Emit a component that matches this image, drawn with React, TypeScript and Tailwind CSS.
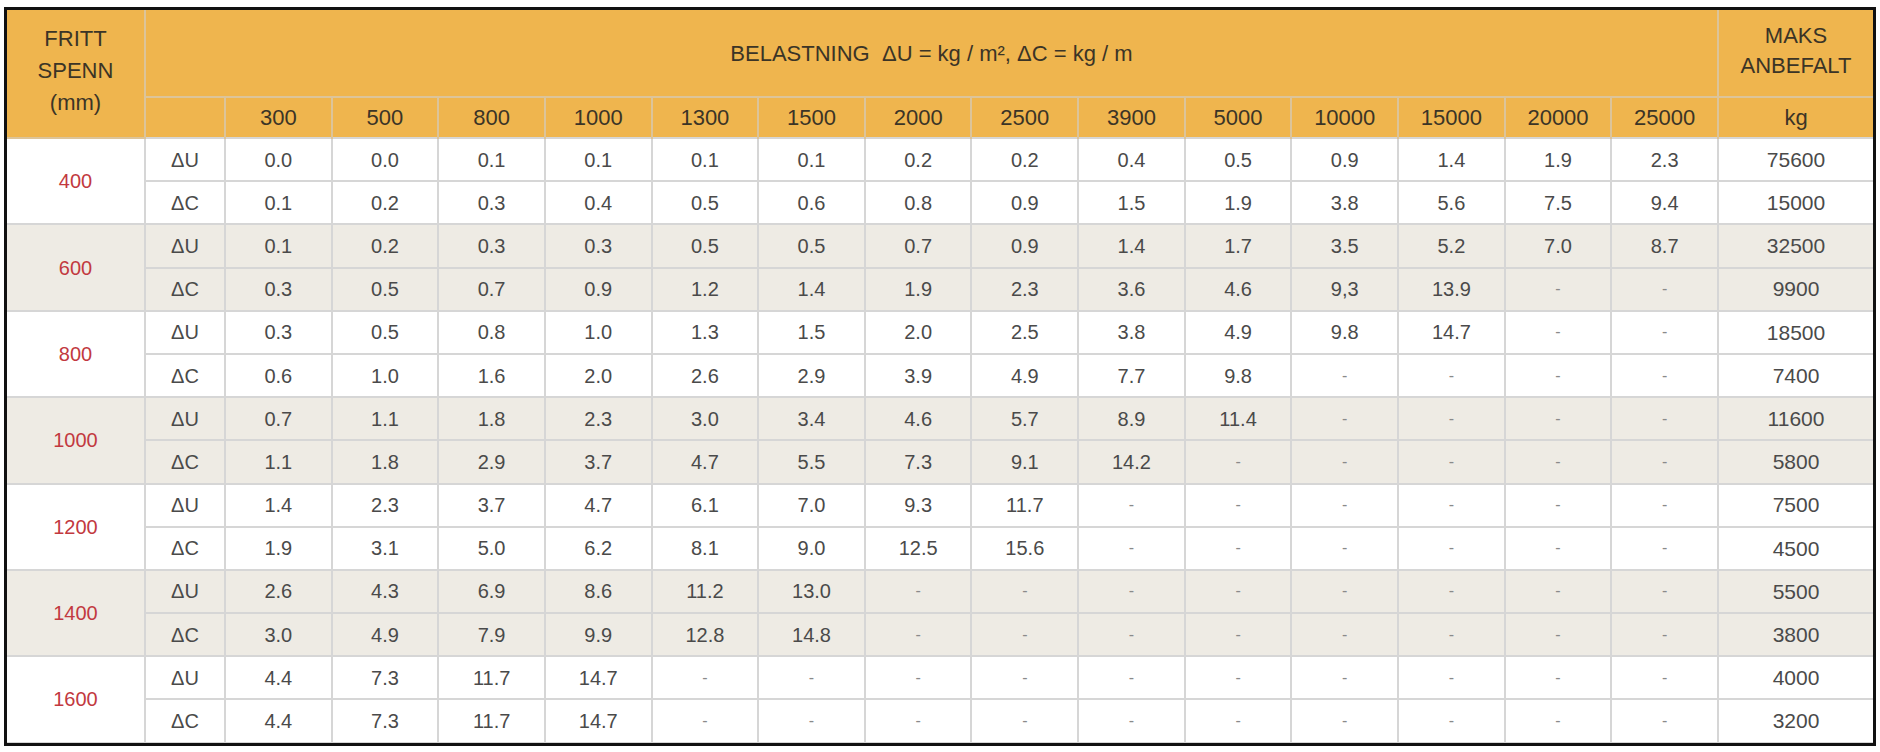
const spans = ["300", "500", "800", "1000", "1300", "1500", "2000", "2500", "3900", "5000", "10000", "15000", "20000", "25000"];

type Group = {
  span: string;
  u: string[];
  c: string[];
  maxU: string;
  maxC: string;
};

const fill = (vals: string[]) => [...vals, ...Array(14 - vals.length).fill("-")];

const groups: Group[] = [
  {
    span: "400",
    u: ["0.0", "0.0", "0.1", "0.1", "0.1", "0.1", "0.2", "0.2", "0.4", "0.5", "0.9", "1.4", "1.9", "2.3"],
    c: ["0.1", "0.2", "0.3", "0.4", "0.5", "0.6", "0.8", "0.9", "1.5", "1.9", "3.8", "5.6", "7.5", "9.4"],
    maxU: "75600",
    maxC: "15000",
  },
  {
    span: "600",
    u: ["0.1", "0.2", "0.3", "0.3", "0.5", "0.5", "0.7", "0.9", "1.4", "1.7", "3.5", "5.2", "7.0", "8.7"],
    c: fill(["0.3", "0.5", "0.7", "0.9", "1.2", "1.4", "1.9", "2.3", "3.6", "4.6", "9,3", "13.9"]),
    maxU: "32500",
    maxC: "9900",
  },
  {
    span: "800",
    u: fill(["0.3", "0.5", "0.8", "1.0", "1.3", "1.5", "2.0", "2.5", "3.8", "4.9", "9.8", "14.7"]),
    c: fill(["0.6", "1.0", "1.6", "2.0", "2.6", "2.9", "3.9", "4.9", "7.7", "9.8"]),
    maxU: "18500",
    maxC: "7400",
  },
  {
    span: "1000",
    u: fill(["0.7", "1.1", "1.8", "2.3", "3.0", "3.4", "4.6", "5.7", "8.9", "11.4"]),
    c: fill(["1.1", "1.8", "2.9", "3.7", "4.7", "5.5", "7.3", "9.1", "14.2"]),
    maxU: "11600",
    maxC: "5800",
  },
  {
    span: "1200",
    u: fill(["1.4", "2.3", "3.7", "4.7", "6.1", "7.0", "9.3", "11.7"]),
    c: fill(["1.9", "3.1", "5.0", "6.2", "8.1", "9.0", "12.5", "15.6"]),
    maxU: "7500",
    maxC: "4500",
  },
  {
    span: "1400",
    u: fill(["2.6", "4.3", "6.9", "8.6", "11.2", "13.0"]),
    c: fill(["3.0", "4.9", "7.9", "9.9", "12.8", "14.8"]),
    maxU: "5500",
    maxC: "3800",
  },
  {
    span: "1600",
    u: fill(["4.4", "7.3", "11.7", "14.7"]),
    c: fill(["4.4", "7.3", "11.7", "14.7"]),
    maxU: "4000",
    maxC: "3200",
  },
];

const cell = "border-2 border-[#d6d6d6] text-center align-middle";
const head = "border-2 border-[#dcc49a] text-center align-middle";

function DataRow({ g, kind, bg }: { g: Group; kind: "U" | "C"; bg: string }) {
  const vals = kind === "U" ? g.u : g.c;
  return (
    <tr className={`h-[43.2px] ${bg}`}>
      {kind === "U" && (
        <td rowSpan={2} className={`${cell} border-l-0 text-[20px] text-[#c2393f]`}>
          {g.span}
        </td>
      )}
      <td className={`${cell} text-[20px] text-[#4a4a4a]`}>Δ{kind}</td>
      {vals.map((v, i) => (
        <td
          key={i}
          className={`${cell} ${v === "-" ? "text-[16px] text-[#8a8a8a]" : "text-[20px] text-[#4a4a4a]"}`}
        >
          {v}
        </td>
      ))}
      <td className={`${cell} border-r-0 text-[21px] text-[#4a4a4a]`}>
        {kind === "U" ? g.maxU : g.maxC}
      </td>
    </tr>
  );
}

export default function App() {
  return (
    <div className="bg-white w-[1880px] h-[752px] pt-[7px] pl-[4px] font-['Liberation_Sans',Arial,sans-serif]">
      <div className="w-[1872px] h-[739px] border-[3px] border-[#111] overflow-hidden">
        <table className="w-full table-fixed border-collapse">
          <colgroup>
            <col className="w-[138px]" />
            <col className="w-[80px]" />
            {spans.map((s) => (
              <col key={s} />
            ))}
            <col className="w-[155px]" />
          </colgroup>
          <thead className="bg-[#efb54e] text-[#3b3426]">
            <tr className="h-[87px]">
              <th
                rowSpan={2}
                className={`${head} border-l-0 border-t-0 align-top pt-[13px] text-[22px] font-normal leading-[32px]`}
              >
                FRITT
                <br />
                SPENN
                <br />
                (mm)
              </th>
              <th
                colSpan={15}
                className={`${head} border-t-0 text-[22px] font-normal whitespace-pre`}
              >
                {"BELASTNING  ΔU = kg / m², ΔC = kg / m"}
              </th>
              <th className={`${head} border-t-0 border-r-0 text-[22px] font-normal leading-[30px] pb-[4px]`}>
                MAKS
                <br />
                ANBEFALT
              </th>
            </tr>
            <tr className="h-[41px]">
              <th className={`${head} border-b-0`} />
              {spans.map((s) => (
                <th key={s} className={`${head} border-b-0 text-[22px] font-normal`}>
                  {s}
                </th>
              ))}
              <th className={`${head} border-b-0 border-r-0 text-[22px] font-normal`}>kg</th>
            </tr>
          </thead>
          <tbody>
            {groups.map((g, i) => {
              const bg = i % 2 === 0 ? "bg-white" : "bg-[#eeebe4]";
              return [
                <DataRow key={g.span + "u"} g={g} kind="U" bg={bg} />,
                <DataRow key={g.span + "c"} g={g} kind="C" bg={bg} />,
              ];
            })}
          </tbody>
        </table>
      </div>
    </div>
  );
}
